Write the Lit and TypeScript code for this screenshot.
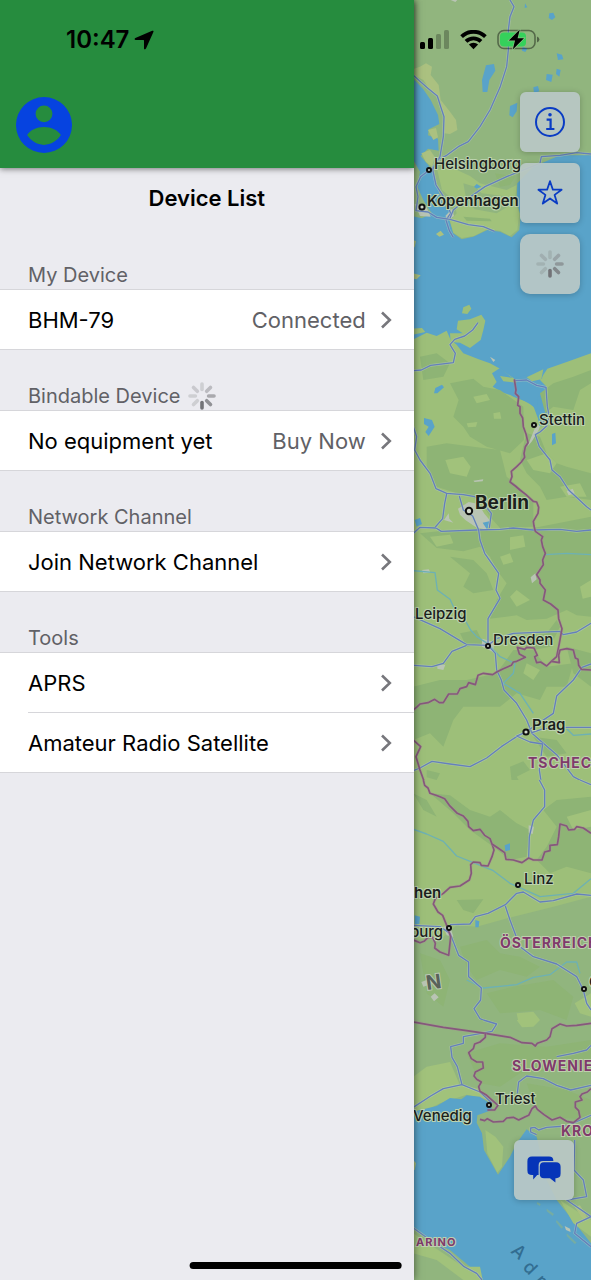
import { LitElement, html, css, svg } from "lit";
import { customElement, property } from "lit/decorators.js";

interface Row {
  label: string;
  value?: string;
}
interface Section {
  title: string;
  loading?: boolean;
  rows: Row[];
}

const SECTIONS: Section[] = [
  { title: "My Device", rows: [{ label: "BHM-79", value: "Connected" }] },
  { title: "Bindable Device", loading: true, rows: [{ label: "No equipment yet", value: "Buy Now" }] },
  { title: "Network Channel", rows: [{ label: "Join Network Channel" }] },
  { title: "Tools", rows: [{ label: "APRS" }, { label: "Amateur Radio Satellite" }] },
];

/* Opacity of each spinner spoke, clockwise from the top. */
const SPOKES = [0.22, 0.42, 0.56, 0.7, 0.85, 1, 0.22, 0.28];
const SPOKE_SHADES = [0.24, 0.4, 0.55, 0.75, 1, 0.24, 0.24, 0.28].map((v, i) => Math.min(v, SPOKES[i] + 0.2));

/* Eight-spoke activity indicator; the darkest spoke points down. */
@customElement("activity-spinner")
export class ActivitySpinner extends LitElement {
  static styles = css`
    :host { display: block; width: 28px; height: 28px; }
    .spinner { display: block; width: 100%; height: 100%; }
    .spoke { stroke: #727377; stroke-width: 3.6; stroke-linecap: round; }
  `;
  render() {
    return html`<svg class="spinner" viewBox="-14 -14 28 28" aria-hidden="true">
      ${SPOKE_SHADES.map(
        (o, i) => svg`<line class="spoke" x1="0" y1="-6.6" x2="0" y2="-12" stroke-opacity=${o} transform="rotate(${i * 45})"></line>`
      )}
    </svg>`;
  }
}

/* Terrain map: each sheet is drawn on a grid of three units per pixel. */
@customElement("terrain-map")
export class TerrainMap extends LitElement {
  static styles = css`
    :host { display: block; overflow: hidden; }
    .map { display: block; width: 100%; height: 100%; font-family: Inter, "Liberation Sans", sans-serif; }
    .sea { fill: #59a3c9; }
    .land { fill: #9dbf79; }
    .wood { fill: #8eb475; }
    .field { fill: #a1c27b; }
    .hill { fill: #91b57e; }
    .sand { fill: #abc180; }
    .town { fill: #b9c4b4; }
    .casing { fill: none; stroke: #b9cdc0; stroke-width: 8; stroke-linejoin: round; opacity: 0.5; }
    .road { fill: none; stroke: #6480bb; stroke-width: 4; stroke-linejoin: round; }
    .river { fill: none; stroke: #6db1b4; stroke-width: 4; stroke-linejoin: round; }
    .border { fill: none; stroke: #86587c; stroke-width: 5; stroke-linejoin: round; }
    .halo { fill: none; stroke: #a98f9a; stroke-width: 9; stroke-linejoin: round; opacity: 0.4; }
    .dot { fill: #d4dccd; stroke: #111; stroke-width: 2; }
    .city { font-size: 15px; font-weight: 500; fill: #1b211d; stroke: #bdd3b0; stroke-width: 2px; paint-order: stroke; }
    .large { font-size: 19px; font-weight: 700; }
    .bold { font-weight: 600; }
    .country { font-size: 14px; font-weight: 700; letter-spacing: 1px; fill: #7f3a6b; stroke: #bfcfae; stroke-width: 2px; paint-order: stroke; }
    .tiny { font-size: 11px; }
    .alps { font-size: 20px; font-weight: 700; fill: #59625a; stroke: #bccab5; stroke-width: 2px; paint-order: stroke; }
    .water { font-size: 18px; font-weight: 500; fill: #326d91; }
  `;

  private road(d: string) {
    return svg`<path class="casing" d=${d}></path><path class="road" d=${d}></path>`;
  }
  private border(d: string) {
    return svg`<path class="halo" d=${d}></path><path class="border" d=${d}></path>`;
  }
  private dot(x: number, y: number, r = 2) {
    return svg`<circle class="dot" cx=${x} cy=${y} r=${r}></circle>`;
  }

  private north() {
    return svg`<g transform="scale(.333333)">
      <path class="hill" d="M0 0H573V910H0z"></path>
      <path class="sea" d="M40 236L70 268L92 300L114 345L118 372L86 388L84 406L114 416L116 452L84 446L62 468L84 494L98 515L112 560L128 612L158 640L148 660L160 700L185 718L220 710L262 690L300 695L335 712L358 690L362 650L350 600L352 550L400 500L480 466H573V910H0V640L66 655L95 640L70 600L52 560L60 515L40 480z"></path>
      <path class="sand" d="M42 206L60 200L78 190L96 200L92 225L116 255L122 300L150 335L168 360L172 390L150 402L132 400L134 350L120 300L90 270L70 240L42 226z"></path>
      <path class="field" d="M112 510L150 500L210 528L240 550L320 570L350 555L345 600L358 640L352 690L330 708L300 692L262 688L222 708L185 714L160 698L150 662L170 640L160 600L126 570z"></path>
      <path class="hill" d="M190 550L225 560L245 580L330 590L320 622L290 640L225 628L200 605z"></path>
      <path class="wood" d="M190 650L270 656L275 664L200 662zM285 520L345 530L330 555L300 560z"></path>
      <path class="sand" d="M84 390L108 384L114 412L100 420zM64 460L90 450L104 470L96 500L78 486zM108 702L122 692L132 704L118 710zM40 820L62 826L50 838L40 836zM40 720L48 724L44 742H40z"></path>
      <path class="sea" d="M258 196L282 192L286 212L268 240L262 276L248 276L246 240zM330 318L352 308L350 334L338 352L328 346zM448 40L460 38L466 52L456 60L446 54zM470 160L486 164L490 178L474 180zM440 222L458 224L454 246L438 240zM470 206L482 210L478 230L468 222zM400 262L414 258L418 274L402 280zM375 10L382 22L374 24zM368 140L382 146L376 156L366 152zM222 560L230 552L244 560L230 566z"></path>
      <path class="town" d="M44 612L78 618L92 650L60 648zM136 648L156 626L162 648L146 660zM152 0H172L166 6z"></path>
      ${this.road("M330 0L342 20L330 50L325 90V150L320 200L300 262L270 330L240 380L205 425L175 440L140 466L112 480L95 508")}
      ${this.road("M40 226L80 262L112 288L122 320L132 350L130 410L120 470L98 508L108 555L132 592L152 640L138 660L148 692L160 712")}
      ${this.road("M88 510L62 530L48 560L54 590L48 632L84 636L110 652L150 658L205 674L250 680L284 694")}
      ${this.road("M150 655L160 630L200 598L255 560L320 530L380 506L420 490L424 470L480 466L530 458L573 462")}
    </g>`;
  }

  private baltic() {
    return svg`<g transform="translate(0 300) scale(.333333)">
      <path class="sea" d="M0 0H573V780H0z"></path>
      <path class="land" d="M40 118L80 98L110 108L140 92L152 120L170 134L190 160L236 178L270 190L300 206L345 238L318 246L300 262L340 290L380 305L400 318L412 350L425 380L440 350L446 310L420 240L442 206L500 186L573 160V780H0V118z"></path>
      <path class="sea" d="M276 220L300 204L340 236L372 226L420 240L440 260L442 290L414 290L412 330L390 312L352 292L310 278L278 260L290 246z"></path>
      <path class="sea" d="M404 212L430 208L426 236L404 240z"></path>
      <path class="land" d="M186 40L190 22L208 14L214 26L202 42zM170 88L174 62L210 58L244 44L256 62L250 90L242 120L210 144L180 128L152 126L150 100L188 100zM300 228L340 234L350 248L310 244z M380 232L430 208L424 238L396 244zM40 86L66 84L76 96L40 104z"></path>
      <path class="wood" d="M150 250L220 236L250 260L300 270L370 320L372 420L330 460L260 440L210 410L190 380L160 350L176 300zM380 400L420 410L440 460L470 490L500 500L573 520V600L500 590L440 600L420 560L380 520L360 480L372 430zM80 440L140 430L220 440L300 450L320 530L400 600L400 680L300 684L270 650L240 600L170 580L110 560L80 500zM420 280L460 250L520 230L573 210V250L540 270L520 330L460 320L436 340zM60 170L110 160L150 190L130 230L70 240z"></path>
      <path class="field" d="M136 480L190 470L212 500L200 530L150 520zM380 480L440 460L470 490L450 520L400 510zM220 290L260 282L270 300L230 310zM200 370L232 366L228 380L204 382zM280 340L300 336L304 356L282 356zM480 560L540 550L560 590L500 590z"></path>
      <path class="sea" d="M72 354L96 360L104 380L86 408L76 396L86 380L72 372zM106 264L126 254L132 262L112 280L102 280zM456 402L466 398L468 430L456 436zM44 660L60 654L66 672L50 680z"></path>
      <path class="town" d="M174 626L206 606L236 612L252 640L272 664L262 690L228 682L196 660L180 644zM132 660L146 640L148 656L160 668zM270 170L286 180L280 186zM382 440L404 386L424 366L416 390L396 424zM500 574L518 566L524 580L506 586zM220 542L250 538L248 544L224 546z"></path>
      <path class="sea" d="M248 668L268 664L262 690zM414 350L432 340L430 372L418 378z"></path>
      ${this.road("M40 212L64 210L92 196L160 188L166 160L150 134L164 118L194 108L218 90L234 68")}
      ${this.road("M345 242L380 240L410 256L438 262L442 320L448 350L440 378L420 396L406 404L418 440L450 480L456 510L480 530L506 570L560 620L573 630")}
      ${this.road("M40 380L50 410L44 450L60 480L90 520L108 566L140 580L190 584L224 590L250 610L274 640L268 684")}
    </g>`;
  }

  private saxony() {
    return svg`<g transform="translate(0 540) scale(.333333)">
      <path class="land" d="M0 0H573V780H0z"></path>
      <path class="wood" d="M60 -20L150 -30L400 -36L573 -70V230L530 226L500 210L440 236L380 240L350 226L270 236L290 180L320 130L290 90L270 50L240 20L190 34L110 24z"></path>
      <path class="wood" d="M150 50L220 60L260 100L280 150L220 160L190 140L210 100z"></path>
      <path class="wood" d="M470 240L480 260L450 320L400 330L390 290L440 280zM40 440L120 420L200 420L290 400L340 330L400 330L440 380L520 370L500 440L440 440L420 480L350 460L300 500L190 500L160 540L130 620L90 580L40 600zM500 320L573 340V440L520 400zM330 680L370 664L390 690L350 710L380 760L340 770zM80 690L120 700L110 720L80 712zM400 590L470 600L500 640L440 650zM180 280L230 270L250 310L200 320z"></path>
      <path class="field" d="M540 140L573 120V170L548 176zM350 150L390 180L350 200L330 170zM90 -10L150 -16L160 10L110 20zM330 -8L370 -14L376 20L330 30zM300 50L330 40L340 66L310 74zM380 370L420 390L400 420L370 400z"></path>
      <path class="town" d="M392 112L406 100L410 118L396 130zM112 376L136 374L130 390L112 386zM246 296L282 306L280 336L246 320zM66 90L86 88L92 98L70 100z"></path>
      <path class="river" d="M40 92L105 98L112 150L150 178L165 210L195 240L212 270L230 290L262 310L300 350L345 370L340 400L310 430L360 460L400 520"></path>
      <path class="river" d="M436 44L500 40L573 44M500 566L520 586L573 582"></path>
      ${this.road("M40 -20L60 -38L108 -36L124 -26L230 -30L300 -32L340 -36L400 -30L480 -32L530 -26L573 -30")}
      ${this.road("M140 -138L134 -110L128 -64L106 -39")}
      ${this.road("M178 -132L190 -90L218 -72L236 -30L240 0L254 40L296 100L288 150L300 175L264 236V316L286 340L290 390L304 420L312 450L350 490L380 540L396 580L430 610L470 644L520 710L573 738")}
      ${this.road("M40 230L120 266L200 314L264 316L290 296L340 280L480 274L490 284L530 276L573 250")}
      ${this.road("M200 316L156 334L130 370L96 380L40 376")}
      ${this.road("M573 372L546 382L520 420L470 468L460 520L400 560L378 576L350 590L304 620L260 654L210 680L150 672L96 664L60 684L40 692")}
      ${this.road("M396 578L430 566L500 562L573 562")}
      ${this.road("M378 576L350 588L390 606L428 612L418 690L432 780")}
      ${this.border("M343 -482L348 -450L346 -440L356 -430L353 -404L360 -400L360 -380L368 -366L370 -340L378 -318L384 -292L376 -280L372 -260L374 -248L364 -234L350 -220L334 -206L336 -190L330 -174L346 -162L360 -150L378 -136L400 -116L410 -114L416 -98L414 -80L400 -56L402 -42L406 -26L428 -10L424 0L428 20L436 40L428 60L430 74L410 104L420 120L420 130L436 150L430 180L452 192L474 210L476 236L486 266L478 310L470 350L454 364L440 378L422 366L410 368L404 350L412 346L402 324L380 322L374 328L352 322L358 342L376 352L350 364L340 366L334 376L310 386L290 396L278 404L250 400L234 406L226 434L206 428L200 440L180 446L172 462L146 462L130 488L118 488L104 478L84 488L60 492L52 500L40 510")}
      ${this.border("M454 364L478 368L476 346L480 330L500 326L520 330L526 354L534 358L536 376L544 388L573 390")}
      ${this.border("M40 600L62 620L48 650L60 690L78 740L110 766L150 780")}
    </g>`;
  }

  private austria() {
    return svg`<g transform="translate(0 780) scale(.333333)">
      <path class="land" d="M0 0H573V780H0z"></path>
      <path class="wood" d="M90 40L150 46L210 90L270 110L300 90L350 130L390 150L380 230L330 240L280 200L210 150L160 100zM430 90L470 60L573 50V280L500 260L450 280L410 240L440 200L470 140zM170 360L250 358L220 400L190 390zM40 40L80 60L110 110L70 90z"></path>
      <path class="hill" d="M40 480L130 470L170 436L230 440L340 410L460 380L573 350V780H40z"></path>
      <path class="wood" d="M180 500L260 480L300 520L360 530L420 560L380 590L300 570L230 600L200 560zM260 640L340 620L460 600L520 650L500 720L420 690L300 700zM60 520L120 540L150 600L130 680L80 640z"></path>
      <path class="field" d="M350 700L400 695L420 720L390 740L356 730zM524 670L573 640V710L540 700zM500 110L573 90V140L520 150z"></path>
      <path class="town" d="M92 650L104 640L116 652L102 664zM64 606L80 600L84 616L70 620zM386 136L402 140L398 162L386 158zM130 440L150 436L160 470L140 466z"></path>
      <path class="sea" d="M314 196L330 190L330 210L316 214zM44 406L60 410L58 432H44zM226 420L238 424L236 442L226 442z"></path>
      <path class="river" d="M40 148L80 162L130 184L170 228L220 248L280 272L330 310L420 350L520 340L573 296"></path>
      <path class="river" d="M200 600L250 624L350 614L400 592L450 584L500 546L530 546L540 580"></path>
      ${this.road("M418 0L434 30V80L400 120L388 170L386 236")}
      ${this.road("M573 346L530 342L460 362L420 366L370 336L350 340L316 374L264 400L226 410L210 432L150 434")}
      ${this.road("M316 378L330 420L360 500L400 530L470 552L530 590L550 630L560 670L573 690")}
      ${this.road("M40 436L120 440L150 460L176 526L206 546V590L244 624L242 660L222 686L240 716L286 736L270 752L190 760")}
      ${this.road("M540 0L573 14")}
      ${this.border("M70 0L74 16L84 24L90 40L108 46L120 50L134 56L148 76L172 100L190 108L204 124L206 140L220 152L240 148L254 166L270 176L276 192L282 210L276 230L264 258L244 256L240 248L220 246L212 254L214 280L208 300L180 318L150 322L130 340L106 356L100 372L114 396L128 406L140 436L152 470L146 526L120 516L104 504L106 490L98 472L84 472L72 484L60 488L40 480")}
      ${this.border("M276 192L294 204L314 218L318 238L340 240L366 248L386 234L400 240L426 240L434 216L450 212L450 196L472 194L476 170L480 132L500 138L506 150L524 148L530 140L550 144L573 160")}
      ${this.border("M40 722L140 740L200 752L330 780M420 780L450 744L530 728L573 736")}
    </g>`;
  }

  private adriatic() {
    return svg`<g transform="translate(0 1020) scale(.333333)">
      <path class="hill" d="M0 0H573V780H0z"></path>
      <path class="field" d="M40 170L80 140L150 126L180 196L240 206L270 240L200 224L120 250L40 290z"></path>
      <path class="wood" d="M200 100L300 70L440 80L573 60V130L460 150L360 160L300 200L240 190zM380 190L500 210L573 240V300L440 290L400 250z"></path>
      <path class="sea" d="M40 275L110 258L150 234L184 238L200 226L240 230L272 252L276 270L232 286L230 308L246 340L252 390L294 464L330 410L350 370L380 328L410 350L440 480L470 540L573 670V780H240L210 740L150 690L110 672L40 620z"></path>
      <path class="field" d="M256 330L286 350L310 380L306 440L292 458L262 400zM350 0H420L400 20L366 22z"></path>
      <path class="field" d="M480 540L510 560L573 600V650L520 610zM40 640L100 680L190 740L240 740L248 780H190L110 720L40 700z"></path>
      <path class="sand" d="M524 560L540 556L560 590L548 596zM40 420L48 430L44 450H40z"></path>
      <path class="hill" d="M412 546L422 552L420 558L410 552zM440 566L462 582L458 588L440 574zM470 600L490 622L484 626L468 606zM500 640L530 668L524 672L500 648z" opacity=".5"></path>
      <path class="town" d="M494 618L510 626L512 636L498 630z"></path>
      ${this.road("M250 0L290 12L276 34L190 50V70L152 80L156 112L172 140L186 194L130 206L92 228L40 262M186 194L240 216L276 250")}
      ${this.road("M352 220L356 186L380 168L430 176L470 196L512 210L573 196")}
      ${this.road("M470 110L520 100L560 90L573 76")}
      ${this.road("M410 344L392 336L392 324L404 322L416 330L440 322L500 318L573 286M524 360L522 450L550 480L560 530L500 540L573 590L530 610L524 640L573 680")}
      ${this.road("M40 624L90 660L150 700L192 740L230 760L246 780")}
      ${this.border("M40 6L130 22L200 32L256 40L330 52L366 68L396 70L406 78L412 70L440 60L450 50L456 26L480 12L500 18L530 16L573 10")}
      ${this.border("M256 40V52L240 66L224 72L220 86L206 98L214 116L230 126L248 126L250 144L226 156L222 168L230 178L244 186L236 200L240 214L260 226L294 256L284 270L262 270")}
      ${this.border("M240 298L254 302L262 296L280 306L310 304L320 294L340 292L356 300L376 290L386 286L396 266L406 258L412 268L432 284L456 300L480 292L500 304L520 308L540 292L536 272L526 262L526 246L546 240L540 230L546 222L562 216L573 206")}
    </g>`;
  }

  render() {
    return html`<svg class="map" viewBox="414 0 178 1280" preserveAspectRatio="xMinYMin slice" role="img" aria-label="Map">
      <g transform="translate(400 0)">
        ${this.north()}${this.baltic()}${this.saxony()}${this.austria()}${this.adriatic()}
      </g>
      ${this.dot(429, 170)}${this.dot(422, 207, 2.6)}${this.dot(534, 425)}${this.dot(469, 511, 3.2)}
      ${this.dot(488, 646)}${this.dot(526, 732, 2.6)}${this.dot(518, 885)}${this.dot(449, 928)}
      ${this.dot(584, 989)}${this.dot(489, 1105)}
      <text class="city" x="434" y="169">Helsingborg</text>
      <text class="city bold" x="427" y="206">Kopenhagen</text>
      <text class="city" x="539" y="425">Stettin</text>
      <text class="city large" x="475" y="509">Berlin</text>
      <text class="city" x="415" y="619">Leipzig</text>
      <text class="city" x="493" y="645">Dresden</text>
      <text class="city bold" x="532" y="730">Prag</text>
      <text class="country" x="528" y="768">TSCHECH</text>
      <text class="city" x="524" y="884">Linz</text>
      <text class="city bold" x="414" y="898">hen</text>
      <text class="city" x="410" y="937">burg</text>
      <text class="country" x="500" y="948">ÖSTERREICH</text>
      <text class="alps" x="426" y="989" transform="rotate(-8 434 982)">N</text>
      <text class="city bold" x="589" y="987">G</text>
      <text class="country" x="512" y="1071">SLOWENIEN</text>
      <text class="city" x="495" y="1104">Triest</text>
      <text class="city" x="413" y="1121">Venedig</text>
      <text class="country" x="561" y="1136">KROA</text>
      <text class="country tiny" x="416" y="1246">ARINO</text>
      <text class="water" transform="translate(510 1252) rotate(42)">A</text>
      <text class="water" transform="translate(522 1268) rotate(46)">d</text>
      <text class="water" transform="translate(534 1281) rotate(50)">r</text>
    </svg>`;
  }
}

@customElement("device-section")
export class DeviceSection extends LitElement {
  @property({ attribute: false }) section!: Section;

  static styles = css`
    :host { display: block; }
    .heading {
      display: flex;
      align-items: center;
      gap: 8px;
      box-sizing: border-box;
      height: 60px;
      margin: 0;
      padding: 31px 28px 0;
      font-size: 20px;
      line-height: 30px;
      font-weight: 400;
      color: #616166;
    }
    .list {
      list-style: none;
      margin: 0;
      padding: 0;
      background: #fff;
      border: solid #d6d6da;
      border-width: 1px 0;
    }
    .item + .item { border-top: 1px solid #d6d6da; margin-left: 28px; }
    .item + .item .row { padding-left: 0; }
    .row {
      display: flex;
      align-items: center;
      width: 100%;
      height: 59px;
      margin: 0;
      padding: 0 22px 0 28px;
      border: 0;
      background: none;
      font: inherit;
      font-size: 22px;
      color: #000;
      text-align: left;
      cursor: pointer;
    }
    .label { flex: 1; }
    .value { color: #616166; }
    .chevron { width: 12px; height: 18px; margin-left: 14px; fill: none; stroke: #77777c; stroke-width: 2.6; }
  `;

  render() {
    const s = this.section;
    return html`<section>
      <h2 class="heading">${s.title}${s.loading ? html`<activity-spinner></activity-spinner>` : ""}</h2>
      <ul class="list">
        ${s.rows.map(
          (r) => html`<li class="item">
            <button class="row" type="button">
              <span class="label">${r.label}</span>
              ${r.value ? html`<span class="value">${r.value}</span>` : ""}
              <svg class="chevron" viewBox="0 0 12 18" aria-hidden="true"><path d="M2 1.5L9.8 9L2 16.5"></path></svg>
            </button>
          </li>`
        )}
      </ul>
    </section>`;
  }
}

@customElement("app-root")
export class AppRoot extends LitElement {
  static styles = css`
    :host { display: block; font-family: Inter, "Liberation Sans", sans-serif; }
    .screen {
      position: relative;
      display: grid;
      grid-template-columns: 70% 1fr;
      min-height: 100vh;
      overflow: hidden;
    }
    .drawer {
      position: relative;
      z-index: 1;
      background: #ebebf0;
      box-shadow: 0 0 8px rgba(0, 0, 0, 0.55);
    }
    .profile {
      box-sizing: border-box;
      height: 168px;
      padding: 24px 16px 0;
      background: #268c3e;
      box-shadow: 0 1px 6px rgba(0, 0, 0, 0.5);
    }
    .clock {
      display: flex;
      align-items: center;
      gap: 5px;
      padding-left: 50px;
      font-size: 24px;
      line-height: 32px;
      font-weight: 600;
      color: #000;
    }
    .arrow { width: 20px; height: 20px; }
    .account {
      display: block;
      width: 56px;
      height: 56px;
      margin-top: 41px;
      padding: 0;
      border: 0;
      background: none;
      cursor: pointer;
    }
    .face { display: block; width: 100%; height: 100%; fill: #0643e0; }
    .title {
      margin: 0;
      height: 61px;
      font-size: 22px;
      line-height: 61px;
      font-weight: 600;
      text-align: center;
      color: #000;
    }
    .pane { position: relative; display: flex; }
    .terrain { position: absolute; inset: 0; }
    .overlay {
      position: relative;
      flex: 1;
      display: flex;
      flex-direction: column;
      padding: 27px 11px 80px 5px;
    }
    .status { display: flex; align-items: center; height: 26px; margin-bottom: 39px; }
    .signal { width: 31px; height: 20px; }
    .wifi { width: 27px; height: 20px; margin-left: 10px; }
    .battery { width: 43px; height: 22px; margin-left: 10px; }
    .controls { display: flex; flex-direction: column; align-items: flex-end; gap: 11px; flex: 1; }
    .tile {
      display: flex;
      align-items: center;
      justify-content: center;
      width: 60px;
      height: 60px;
      padding: 0;
      border: 0;
      border-radius: 6px;
      background: rgba(186, 200, 198, 0.92);
      box-shadow: 0 1px 6px rgba(0, 0, 0, 0.22);
      color: #0a3cc4;
      cursor: pointer;
    }
    .busy { border-radius: 10px; }
    .chat { margin: auto 6px 0 0; }
    .glyph { width: 34px; height: 34px; }
    .home {
      position: absolute;
      z-index: 2;
      left: 50%;
      bottom: 11px;
      width: 36%;
      height: 7px;
      border-radius: 4px;
      background: #000;
      transform: translateX(-50%);
    }
  `;

  render() {
    return html`<main class="screen">
      <aside class="drawer">
        <header class="profile">
          <div class="clock">
            <span>10:47</span>
            <svg class="arrow" viewBox="0 0 20 20" aria-hidden="true">
              <path d="M18.2 .8C19.2 .4 19.8 1 19.4 2L12 18.6C11.4 19.8 10 19.6 10 18.2V10.6C10 10.2 9.8 10 9.4 10H1.8C.4 10 .2 8.6 1.4 8z"></path>
            </svg>
          </div>
          <button class="account" type="button" aria-label="Account">
            <svg class="face" viewBox="0 0 166 166">
              <path fill-rule="evenodd" d="M83 0A83 83 0 1 1 83 166A83 83 0 1 1 83 0zM83 25A25 25 0 1 0 83 75A25 25 0 1 0 83 25zM33 113C44 130 62 142 83 142S122 130 133 113C124 98 105 89 83 89S42 98 33 113z"></path>
            </svg>
          </button>
        </header>
        <h1 class="title">Device List</h1>
        ${SECTIONS.map((s) => html`<device-section .section=${s}></device-section>`)}
      </aside>
      <div class="pane">
        <terrain-map class="terrain"></terrain-map>
        <div class="overlay">
          <div class="status">
            <svg class="signal" viewBox="0 0 31 20" aria-hidden="true">
              <rect x="1" y="12" width="5" height="7" rx="1.5"></rect>
              <rect x="9" y="8" width="5" height="11" rx="1.5"></rect>
              <rect x="17" y="4" width="5" height="15" rx="1.5" opacity=".25"></rect>
              <rect x="25" y="0" width="5" height="19" rx="1.5" opacity=".25"></rect>
            </svg>
            <svg class="wifi" viewBox="0 0 27 20" aria-hidden="true">
              <g fill="none" stroke="#000" stroke-width="3.8">
                <path d="M1.6 6.6A17 17 0 0 1 25.4 6.6"></path>
                <path d="M6 11.4A10.6 10.6 0 0 1 21 11.4"></path>
              </g>
              <path d="M8.9 14.6A6.6 6.6 0 0 1 18.1 14.6L13.5 19.2z"></path>
            </svg>
            <svg class="battery" viewBox="0 0 43 22" aria-hidden="true">
              <rect x="1" y="1.5" width="37" height="18" rx="6" fill="none" stroke="#000" stroke-opacity=".42" stroke-width="1.6"></rect>
              <rect x="3" y="3.5" width="26" height="14" rx="4" fill="#35d15b"></rect>
              <path d="M40 7.5Q42.4 8.5 42.4 10.5T40 13.5z" opacity=".45"></path>
              <path d="M22.8 .6L11.8 11.6H18L15.8 20.6L27 9.2H20.6z" stroke="#8fbf85" stroke-width="1.4" paint-order="stroke"></path>
            </svg>
          </div>
          <div class="controls">
            <button class="tile" type="button" aria-label="Info">
              <svg class="glyph" viewBox="0 0 34 34" fill="none" stroke="currentColor" stroke-width="2">
                <circle cx="17" cy="17" r="14"></circle>
                <circle cx="17" cy="9.8" r="1.8" fill="currentColor" stroke="none"></circle>
                <path d="M13.6 14.6H17.6V24M13.2 24H21.4" stroke-width="2.2"></path>
              </svg>
            </button>
            <button class="tile" type="button" aria-label="Favorites">
              <svg class="glyph" viewBox="0 0 34 34" fill="none" stroke="currentColor" stroke-width="1.8" stroke-linejoin="round">
                <path d="M17 5.2L19.9 13.7H28.6L21.6 18.9L24.2 27.6L17 22.4L9.8 27.6L12.4 18.9L5.4 13.7H14.1z"></path>
              </svg>
            </button>
            <button class="tile busy" type="button" aria-label="Loading">
              <activity-spinner></activity-spinner>
            </button>
            <button class="tile chat" type="button" aria-label="Messages">
              <svg class="glyph" viewBox="0 0 34 34" fill="#0634b8">
                <path d="M5 3.6H22Q26.4 3.6 26.4 8H16Q11.6 8 11.6 12.4V22H10.2L6.2 26.4V22H5Q.4 22 .4 17.4V8.2Q.4 3.6 5 3.6z"></path>
                <path d="M17 9.2H29Q33.6 9.2 33.6 13.8V20.6Q33.6 25.2 29.2 25.2H28.4V29.6L23 25.2H17Q12.8 25.2 12.8 21V13.6Q12.8 9.2 17 9.2z"></path>
              </svg>
            </button>
          </div>
        </div>
      </div>
      <div class="home"></div>
    </main>`;
  }
}
